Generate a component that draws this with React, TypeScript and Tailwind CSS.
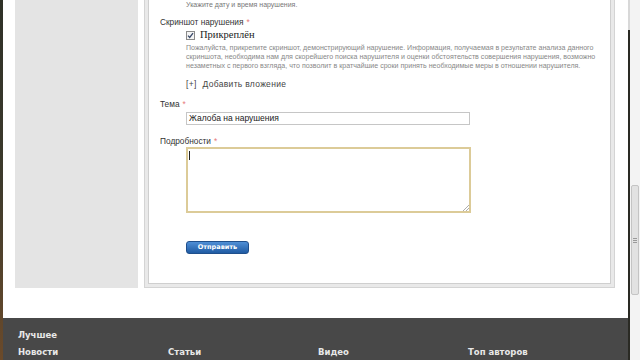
const footerCols = ['Новости', 'Статьи', 'Видео', 'Топ авторов'];

const Star = () => <span className="text-[#e77b7b] ml-[3px]">*</span>;

const App = () => {
  return (
    <div className="w-[640px] h-[360px] overflow-hidden flex bg-white font-['Liberation_Sans',Arial,sans-serif]">
      {/* left photo edge */}
      <div className="w-[3px] h-full bg-gradient-to-b from-[#2f3128] via-[#3d3a2c] to-[#6b4a2a]" />

      {/* page */}
      <div className="w-[625px] h-full flex flex-col">
        <div className="flex h-[288px] pl-[12px] gap-[6px]">
          {/* sidebar */}
          <div className="w-[123px] h-full bg-[#e4e4e4]" />

          {/* form panel */}
          <div className="w-[471px] h-full bg-[#e9e9e9] border border-t-0 border-[#d4d4d4] px-[3px] pb-[3px]">
            <div className="h-full bg-white border border-t-0 border-[#cfcfcf] pl-[11px] text-[#333]">
              <div className="pl-[26px] text-[7px] leading-[9px] text-[#777]">Укажите дату и время нарушения.</div>

              <div className="mt-[8px] text-[8.3px] leading-[10px]">
                Скриншот нарушения<Star />
              </div>
              <div className="mt-[2px] pl-[26px] h-[12px] flex items-center">
                <svg width="9" height="9" viewBox="0 0 9 9" className="mr-[5px]">
                  <rect x="0.5" y="0.5" width="8" height="8" fill="#f4f4f4" stroke="#8a8a8a" />
                  <path d="M2 4.6 L3.7 6.4 L7 2.2" fill="none" stroke="#3a4a6a" strokeWidth="1.3" />
                </svg>
                <span className="font-['Liberation_Serif',serif] text-[10.5px] text-[#222]">Прикреплён</span>
              </div>
              <div className="mt-[2px] pl-[26px] text-[7.05px] leading-[9px] text-[#888] whitespace-nowrap">
                Пожалуйста, прикрепите скриншот, демонстрирующий нарушение. Информация, получаемая в результате анализа данного
                <br />
                скриншота, необходима нам для скорейшего поиска нарушителя и оценки обстоятельств совершения нарушения, возможно
                <br />
                незаметных с первого взгляда, что позволит в кратчайшие сроки принять необходимые меры в отношении нарушителя.
              </div>
              <div className="mt-[9px] pl-[26px] text-[8.5px] leading-[10px] text-[#444] tracking-[0.3px]">
                <span className="mr-[6px]">[+]</span>Добавить вложение
              </div>

              <div className="mt-[10px] text-[8.3px] leading-[10px]">
                Тема<Star />
              </div>
              <div className="mt-[3px] ml-[26px] w-[284px] h-[13px] border border-[#c6c6c6] flex items-center pl-[2px] text-[8.5px] text-[#222]">
                Жалоба на нарушения
              </div>

              <div className="mt-[11px] text-[8.3px] leading-[10px]">
                Подробности<Star />
              </div>
              <div className="mt-[1px] ml-[26px] w-[285px] h-[66px] border-2 border-[#dccb98] relative">
                <div className="ml-[1px] mt-[2px] w-[1px] h-[9px] bg-[#222]" />
                <svg width="6" height="6" viewBox="0 0 6 6" className="absolute right-0 bottom-0">
                  <path d="M6 0 L0 6 M6 3 L3 6" stroke="#999" strokeWidth="0.8" />
                </svg>
              </div>

              <div className="mt-[28px] ml-[26px] w-[63px] h-[13px] rounded-[3px] border border-[#1f4f8c] bg-gradient-to-b from-[#4f8fd6] to-[#1f5ba3] flex items-center justify-center text-white font-['DejaVu_Sans',sans-serif] font-bold text-[6.5px]">
                Отправить
              </div>
            </div>
          </div>
        </div>

        <div className="flex-1" />

        {/* footer */}
        <div className="h-[42px] bg-[#484848] pl-[15px] pt-[12px] font-['DejaVu_Sans',sans-serif] font-bold text-[8.5px] text-[#e8e8e8]">
          <div className="leading-[10px]">Лучшее</div>
          <div className="mt-[7px] flex leading-[10px]">
            {footerCols.map((c) => (
              <div key={c} className="w-[150px]">{c}</div>
            ))}
          </div>
        </div>
      </div>

      {/* right edge: window border + scrollbar */}
      <div className="w-[12px] h-full flex">
        <div className="w-[2px] h-full flex flex-col">
          <div className="h-[30px] bg-[#d8d8d8]" />
          <div className="flex-1 bg-[#2a2a24]" />
        </div>
        <div className="w-[10px] h-full bg-[#f3f3f3] pt-[185px]">
          <div className="ml-[1px] w-[8px] h-[110px] bg-[#e2e2e2] border border-[#c4c4c4] rounded-[2px] flex items-center justify-center">
            <div className="w-[4px] h-[5px] border-y border-[#9a9a9a] flex items-center">
              <div className="w-full h-px bg-[#9a9a9a]" />
            </div>
          </div>
        </div>
      </div>
    </div>
  );
};

export default App;
